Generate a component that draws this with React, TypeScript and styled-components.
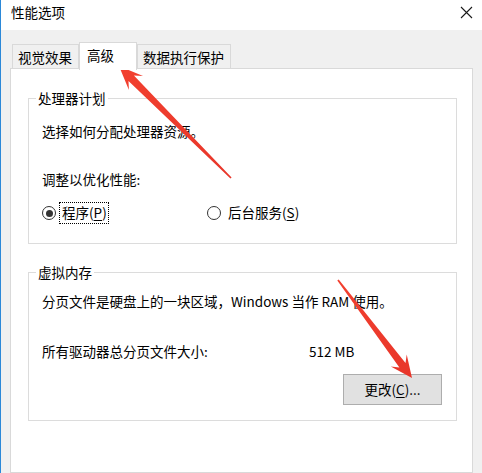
import React from "react";
import styled, { createGlobalStyle } from "styled-components";

const Global = createGlobalStyle`
  html, body { margin: 0; padding: 0; overflow: hidden; background: #f0f0f0; }
  * { box-sizing: border-box; }
`;

const FONT = `"Noto Sans CJK SC", "Microsoft YaHei", "Noto Sans", sans-serif`;

const Window = styled.div`
  position: relative;
  width: 482px;
  height: 473px;
  overflow: hidden;
  background: #f0f0f0;
  border-left: 1px solid #2b88d8;
  font-family: ${FONT};
  font-size: 13.5px;
  color: #000;
  display: flex;
  flex-direction: column;
`;

const TitleBar = styled.div`
  height: 30px;
  flex: none;
  background: #fff;
  display: flex;
  align-items: flex-start;
  justify-content: space-between;
  padding: 4px 9px 0 10px;
`;

const Title = styled.div`
  line-height: 17px;
  font-size: 13.5px;
  color: #000;
`;

const Close = styled.div`
  width: 13px;
  height: 13px;
  margin-top: 2px;
  display: flex;
`;

const Body = styled.div`
  flex: 1;
  display: flex;
  flex-direction: column;
  padding: 11px 9px 0 9px;
`;

const TabStrip = styled.div`
  display: flex;
  align-items: flex-end;
  padding-left: 2px;
  height: 28px;
  position: relative;
  z-index: 1;
`;

const Tab = styled.div<{ $w: number; $active?: boolean }>`
  width: ${(p) => p.$w}px;
  height: ${(p) => (p.$active ? 28 : 25)}px;
  margin-bottom: ${(p) => (p.$active ? -1 : 0)}px;
  background: ${(p) => (p.$active ? "#fff" : "#f0f0f0")};
  border: 1px solid #d9d9d9;
  border-bottom: ${(p) => (p.$active ? "none" : "1px solid #d9d9d9")};
  padding: ${(p) => (p.$active ? "4px 0 0 7px" : "4px 0 0 5px")};
  line-height: 17px;
  white-space: nowrap;
`;

const Panel = styled.div`
  flex: 1;
  background: #fff;
  border: 1px solid #d9d9d9;
  margin-top: -1px;
  padding: 0 15px 0 17px;
  display: flex;
  flex-direction: column;
`;

const Group = styled.fieldset<{ $top: number }>`
  margin: ${(p) => p.$top}px 0 0 0;
  padding: 0;
  border: 1px solid #dcdcdc;
  min-width: 0;
`;

const Legend = styled.legend`
  margin-left: 7px;
  padding: 0 2px;
  line-height: 16px;
  font-size: 13.5px;
`;

const GroupContent = styled.div<{ $pt: number; $pb: number }>`
  display: flex;
  flex-direction: column;
  padding: ${(p) => p.$pt}px 14px ${(p) => p.$pb}px 13px;
`;

const Line = styled.div<{ $mt?: number }>`
  line-height: 17px;
  margin-top: ${(p) => p.$mt ?? 0}px;
  white-space: nowrap;
`;

const RadioRow = styled.div`
  display: flex;
  align-items: center;
  height: 22px;
  margin-top: 14px;
`;

const RadioOption = styled.div<{ $w?: number }>`
  display: flex;
  align-items: center;
  ${(p) => (p.$w ? `width: ${p.$w}px;` : "")}
`;

const RadioCircle = styled.span<{ $checked?: boolean }>`
  width: 14px;
  height: 14px;
  border-radius: 50%;
  border: 1px solid #333;
  background: #fff;
  display: flex;
  align-items: center;
  justify-content: center;
  flex: none;
  &::after {
    content: "";
    display: ${(p) => (p.$checked ? "block" : "none")};
    width: 7px;
    height: 7px;
    border-radius: 50%;
    background: #333;
  }
`;

const RadioLabel = styled.span<{ $focus?: boolean }>`
  margin-left: ${(p) => (p.$focus ? 3 : 4)}px;
  padding: 1px 1px 2px 2px;
  line-height: 17px;
  border: 1px ${(p) => (p.$focus ? "dotted #000" : "solid transparent")};
`;

const Key = styled.u`
  text-underline-offset: 2px;
`;

const SizeRow = styled.div`
  display: grid;
  grid-template-columns: 267px auto;
  line-height: 17px;
  margin-top: 33px;
`;

const ButtonRow = styled.div`
  display: flex;
  justify-content: flex-end;
  margin-top: 14px;
`;

const Button = styled.div`
  width: 99px;
  height: 31px;
  background: #e1e1e1;
  border: 1px solid #adadad;
  display: flex;
  align-items: center;
  justify-content: center;
  line-height: 17px;
`;

const Overlay = styled.svg`
  position: absolute;
  left: -1px;
  top: 0;
  pointer-events: none;
`;

type Pt = [number, number];

function arrowPoints(t: Pt, p: Pt, headLen: number, headHalf: number, neckHalf: number, tailHalf: number) {
  const dx = p[0] - t[0];
  const dy = p[1] - t[1];
  const len = Math.hypot(dx, dy);
  const ux = dx / len;
  const uy = dy / len;
  const nx = -uy;
  const ny = ux;
  const base: Pt = [p[0] - ux * headLen, p[1] - uy * headLen];
  const neck: Pt = [p[0] - ux * headLen * 0.72, p[1] - uy * headLen * 0.72];
  const pts: Pt[] = [
    [t[0] + nx * tailHalf, t[1] + ny * tailHalf],
    [neck[0] + nx * neckHalf, neck[1] + ny * neckHalf],
    [base[0] + nx * headHalf, base[1] + ny * headHalf],
    p,
    [base[0] - nx * headHalf, base[1] - ny * headHalf],
    [neck[0] - nx * neckHalf, neck[1] - ny * neckHalf],
    [t[0] - nx * tailHalf, t[1] - ny * tailHalf],
  ];
  return pts.map((q) => `${q[0].toFixed(1)},${q[1].toFixed(1)}`).join(" ");
}

const tabs = [
  { label: "视觉效果", w: 67 },
  { label: "高级", w: 58, active: true },
  { label: "数据执行保护", w: 94 },
];

export default function App() {
  return (
    <>
      <Global />
      <Window>
        <TitleBar>
          <Title>性能选项</Title>
          <Close>
            <svg width="13" height="13" viewBox="0 0 13 13">
              <path d="M1 1 L12 12 M12 1 L1 12" stroke="#1a1a1a" strokeWidth="1.1" fill="none" />
            </svg>
          </Close>
        </TitleBar>
        <Body>
          <TabStrip>
            {tabs.map((t) => (
              <Tab key={t.label} $w={t.w} $active={t.active}>
                {t.label}
              </Tab>
            ))}
          </TabStrip>
          <Panel>
            <Group $top={21}>
              <Legend>处理器计划</Legend>
              <GroupContent $pt={17} $pb={19}>
                <Line>选择如何分配处理器资源。</Line>
                <Line $mt={31}>调整以优化性能:</Line>
                <RadioRow>
                  <RadioOption $w={165}>
                    <RadioCircle $checked />
                    <RadioLabel $focus>
                      程序(<Key>P</Key>)
                    </RadioLabel>
                  </RadioOption>
                  <RadioOption>
                    <RadioCircle />
                    <RadioLabel>
                      后台服务(<Key>S</Key>)
                    </RadioLabel>
                  </RadioOption>
                </RadioRow>
              </GroupContent>
            </Group>
            <Group $top={20}>
              <Legend>虚拟内存</Legend>
              <GroupContent $pt={13} $pb={15}>
                <Line>分页文件是硬盘上的一块区域，Windows 当作 RAM 使用。</Line>
                <SizeRow>
                  <span>所有驱动器总分页文件大小:</span>
                  <span>512 MB</span>
                </SizeRow>
                <ButtonRow>
                  <Button>
                    更改(<Key>C</Key>)...
                  </Button>
                </ButtonRow>
              </GroupContent>
            </Group>
          </Panel>
        </Body>
        <Overlay width="482" height="473" viewBox="0 0 482 473">
          <defs>
            <linearGradient id="ar" x1="0" y1="0" x2="1" y2="1">
              <stop offset="0" stopColor="#f2402f" />
              <stop offset="1" stopColor="#e8362a" />
            </linearGradient>
          </defs>
          <polygon points={arrowPoints([231, 178], [119, 66], 24, 10, 3.8, 0.9)} fill="url(#ar)" />
          <polygon points={arrowPoints([338, 280], [412, 378], 22, 10, 3.8, 0.9)} fill="url(#ar)" />
        </Overlay>
      </Window>
    </>
  );
}
